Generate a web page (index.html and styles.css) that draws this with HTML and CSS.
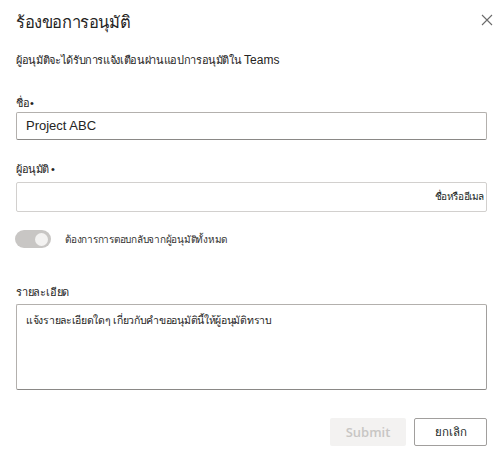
FILE: index.html
```html
<!DOCTYPE html>
<html lang="th">
<head>
<meta charset="utf-8">
<link rel="stylesheet" href="styles.css">
</head>
<body>
<div class="dialog">
  <div class="header">
    <h1 class="title">ร้องขอการอนุมัติ</h1>
    <button class="close" aria-label="ปิด">
      <svg width="12" height="12" viewBox="0 0 12 12"><path d="M1 1L11 11M11 1L1 11" stroke="#6b6b6b" stroke-width="1.1" fill="none"/></svg>
    </button>
  </div>
  <p class="subtitle">ผู้อนุมัติจะได้รับการแจ้งเตือนผ่านแอปการอนุมัติใน <span class="latin">Teams</span></p>

  <label class="label lbl-name">ชื่อ•</label>
  <div class="input input-name">Project ABC</div>

  <label class="label lbl-approver">ผู้อนุมัติ •</label>
  <div class="input input-approver"><span class="placeholder">ชื่อหรืออีเมล</span></div>

  <div class="toggle-row">
    <span class="toggle"><span class="knob"></span></span>
    <span class="toggle-text">ต้องการการตอบกลับจากผู้อนุมัติทั้งหมด</span>
  </div>

  <label class="label lbl-details">รายละเอียด</label>
  <div class="textarea">แจ้งรายละเอียดใดๆ เกี่ยวกับคำขออนุมัตินี้ให้ผู้อนุมัติทราบ</div>

  <div class="actions">
    <button class="btn btn-submit">Submit</button>
    <button class="btn btn-cancel">ยกเลิก</button>
  </div>
</div>
</body>
</html>
```

FILE: styles.css
```css
html, body {
  margin: 0;
  padding: 0;
  background: #ffffff;
}
body {
  font-family: "Liberation Sans", "Noto Sans", sans-serif;
  color: #252423;
  width: 500px;
  height: 455px;
  overflow: hidden;
}
.dialog {
  padding: 0 13px 0 16px;
  display: flex;
  flex-direction: column;
}
.header {
  display: flex;
  justify-content: space-between;
  align-items: center;
  height: 24px;
  margin-top: 10px;
}
.title {
  margin: 0;
  font-size: 16.5px;
  font-weight: normal;
  line-height: 24px;
  letter-spacing: -0.4px;
}
.close {
  border: none;
  background: none;
  padding: 0;
  width: 12px;
  height: 12px;
  display: flex;
  margin-top: -4px;
  margin-right: -6px;
}
.subtitle {
  margin: 17px 0 0 0;
  font-size: 11px;
  line-height: 18px;
  letter-spacing: -0.35px;
}
.subtitle .latin {
  font-size: 12px;
  letter-spacing: 0;
}
.label {
  font-size: 11px;
  line-height: 16px;
  display: block;
}
.lbl-name { margin-top: 26px; }
.lbl-approver { margin-top: 21px; letter-spacing: -0.5px; }
.lbl-details { margin-top: 36px; letter-spacing: -0.2px; }
.input {
  box-sizing: border-box;
  height: 28px;
  margin-top: 1px;
  border: 1px solid #b3b0ad;
  border-bottom-color: #8a8886;
  border-radius: 2px;
  padding: 0 9px;
  font-size: 13px;
  line-height: 26px;
  color: #252423;
}
.input-approver {
  height: 30px;
  margin-top: 5px;
  border-color: #d2d0ce;
  display: flex;
  justify-content: flex-end;
  overflow: hidden;
  padding-right: 2px;
}
.placeholder {
  font-size: 10px;
  line-height: 28px;
  color: #201f1e;
  white-space: nowrap;
  letter-spacing: -0.4px;
}
.toggle-row {
  display: flex;
  align-items: center;
  margin-top: 18px;
  height: 18px;
}
.toggle {
  width: 36px;
  height: 18px;
  border-radius: 9px;
  background: #c8c6c4;
  display: flex;
  align-items: center;
  justify-content: flex-end;
  box-sizing: border-box;
  padding-right: 3px;
  margin-left: -1px;
}
.knob {
  width: 13px;
  height: 13px;
  border-radius: 50%;
  background: #f3f2f1;
}
.toggle-text {
  margin-left: 14px;
  font-size: 10px;
  letter-spacing: -0.25px;
  color: #323130;
}
.textarea {
  box-sizing: border-box;
  height: 86px;
  margin-top: 4px;
  border: 1px solid #b3b0ad;
  border-bottom-color: #8a8886;
  border-right-color: #a19f9d;
  border-radius: 2px;
  padding: 6px 9px;
  font-size: 10.5px;
  letter-spacing: -0.3px;
  line-height: 18px;
}
.actions {
  display: flex;
  justify-content: flex-end;
  gap: 8px;
  margin-top: 28px;
}
.btn {
  box-sizing: border-box;
  height: 28px;
  border-radius: 2px;
  font-size: 13px;
  font-family: "Open Sans", "Noto Sans", sans-serif;
}
.btn-submit {
  width: 76px;
  border: none;
  background: #f3f2f1;
  color: #c8c6c4;
  font-weight: 600;
}
.btn-cancel {
  width: 73px;
  border: 1px solid #a19f9d;
  background: #ffffff;
  color: #201f1e;
  font-family: "Liberation Sans", "Noto Sans", sans-serif;
  font-size: 11.5px;
}
```
